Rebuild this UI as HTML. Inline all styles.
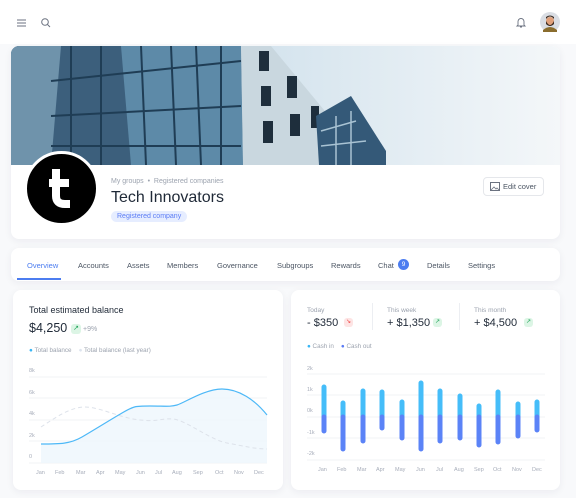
<!DOCTYPE html><html><head><style>
*{margin:0;padding:0;box-sizing:border-box}
body{width:576px;height:498px;background:#f8f9fb;font-family:"Liberation Sans",sans-serif;position:relative;overflow:hidden;color:#1f2937}
.a{position:absolute}
.card{position:absolute;background:#fff;border-radius:8px;box-shadow:0 2px 8px rgba(30,40,70,.06)}
.tab{position:absolute;top:261px;font-size:7.5px;color:#4b5563}
.s{font-size:6px;color:#9ca3af}
</style></head><body>
<div class="a" style="left:0;top:0;width:576px;height:44px;background:#fff"></div>
<svg class="a" style="left:16px;top:17px" width="12" height="12" viewBox="0 0 12 12"><path d="M1 3h9M1 6h9M1 9h9" stroke="#6b7280" stroke-width="1.1"/></svg>
<svg class="a" style="left:40px;top:17px" width="12" height="12" viewBox="0 0 12 12"><circle cx="5" cy="5" r="3.3" fill="none" stroke="#6b7280" stroke-width="1"/><path d="M7.5 7.5L10 10" stroke="#6b7280" stroke-width="1"/></svg>
<svg class="a" style="left:515px;top:16px" width="12" height="13" viewBox="0 0 12 13"><path d="M3 9V5.5a3 3 0 016 0V9l1 1H2z M5 11h2" fill="none" stroke="#6b7280" stroke-width=".9"/></svg>
<svg class="a" style="left:540px;top:12px" width="20" height="20" viewBox="0 0 20 20"><circle cx="10" cy="10" r="10" fill="#d9dde3"/><path d="M3 18q7-6 14 0v2H3z" fill="#8a6d2e"/><circle cx="10" cy="9" r="4" fill="#e0a07a"/><path d="M6 9q4 8 8 0v3q-4 4-8 0z" fill="#3a2a20"/><path d="M6 7q4-5 8 0v-2q-4-3-8 0z" fill="#3a2a20"/></svg>

<div class="card" style="left:11px;top:46px;width:549px;height:193px;overflow:hidden">
<svg class="a" style="left:0;top:0" width="549" height="119" viewBox="0 0 549 119">
<defs><linearGradient id="sky" x1="0" x2="1"><stop offset="0" stop-color="#b9d3e4"/><stop offset="1" stop-color="#f4f7f9"/></linearGradient></defs>
<rect width="549" height="119" fill="url(#sky)"/>
<polygon points="0,0 230,0 232,119 0,119" fill="#3c5f7c"/>
<polygon points="0,0 50,0 40,119 0,119" fill="#6f93ab"/>
<polygon points="110,0 230,0 232,119 120,119" fill="#5d8aa8"/>
<g stroke="#1f3d55" stroke-width="2" fill="none"><path d="M60 0V119M90 0V119M130 0L135 119M160 0L165 119M185 0L190 119M210 0V119"/><path d="M40 35L230 15M40 70L230 60M40 100L230 100"/></g>
<polygon points="230,0 260,0 318,70 318,119 232,119" fill="#c9d7df"/>
<g fill="#1e2e3c"><rect x="248" y="5" width="10" height="20"/><rect x="250" y="40" width="10" height="20"/><rect x="252" y="75" width="10" height="22"/><rect x="276" y="30" width="10" height="22"/><rect x="279" y="68" width="10" height="22"/><rect x="300" y="60" width="8" height="22"/></g>
<polygon points="305,70 340,50 375,105 375,119 308,119" fill="#345978"/>
<g stroke="#a9c3d3" stroke-width="1.5"><path d="M310 85L345 75M310 100L355 95M325 70V119M340 65V119"/></g>
</svg>
<svg class="a" style="left:13px;top:105px" width="75" height="75" viewBox="0 0 75 75"><circle cx="37.5" cy="37.5" r="36" fill="#000" stroke="#fff" stroke-width="3"/><path d="M32 18V45q0 8 9 8h5M25 32h20" fill="none" stroke="#fff" stroke-width="8"/></svg>
<div class="a s" style="left:100px;top:132px;font-size:7px">My groups &nbsp;•&nbsp; Registered companies</div>
<div class="a" style="left:100px;top:143px;font-size:16px;color:#1f2937">Tech Innovators</div>
<div class="a" style="left:100px;top:165px;font-size:7px;color:#5b7cf5;background:#e6edff;border-radius:8px;padding:2px 6px">Registered company</div>
<div class="a" style="left:472px;top:131px;width:61px;height:19px;border:1px solid #e5e7eb;border-radius:4px;font-size:7.5px;color:#4b5563;line-height:17px;padding-left:19px">Edit cover</div>
<svg class="a" style="left:479px;top:136px" width="10" height="9"><rect x=".5" y=".5" width="9" height="8" fill="none" stroke="#6b7280"/><path d="M1 8l3-3 2 2 1-1 2 2" fill="none" stroke="#6b7280" stroke-width=".8"/></svg>
</div>

<div class="card" style="left:11px;top:248px;width:549px;height:33px"></div>
<div class="a" style="left:17px;top:278px;width:44px;height:2px;background:#4c7df0"></div>
<div class="tab" style="left:27px;color:#4c7df0">Overview</div>
<div class="tab" style="left:78px">Accounts</div>
<div class="tab" style="left:127px">Assets</div>
<div class="tab" style="left:167px">Members</div>
<div class="tab" style="left:217px">Governance</div>
<div class="tab" style="left:277px">Subgroups</div>
<div class="tab" style="left:331px">Rewards</div>
<div class="tab" style="left:378px">Chat</div>
<div class="a" style="left:398px;top:259px;width:11px;height:11px;border-radius:50%;background:#4c7df0;color:#fff;font-size:6.5px;text-align:center;line-height:11px">9</div>
<div class="tab" style="left:427px">Details</div>
<div class="tab" style="left:468px">Settings</div>

<div class="card" style="left:13px;top:290px;width:270px;height:200px"></div>
<div class="a" style="left:29px;top:305px;font-size:9px">Total estimated balance</div>
<div class="a" style="left:29px;top:321px;font-size:12.5px">$4,250</div>
<div class="a" style="left:71px;top:324px;width:10px;height:10px;border-radius:3px;background:#dcf5e5;color:#22a55a;font-size:7px;text-align:center;line-height:10px">↗</div>
<div class="a s" style="left:83px;top:326px;font-size:7px">+9%</div>
<div class="a s" style="left:29px;top:347px;font-size:6.3px"><span style="color:#38b6f5">●</span> Total balance &nbsp;&nbsp;&nbsp;<span style="color:#dde4ee">●</span> Total balance (last year)</div>
<svg class="a" style="left:0;top:360px" width="290" height="120" viewBox="0 360 290 120">
<g stroke="#eef0f4" stroke-width=".7"><path d="M29 377H267M29 398H267M29 420H267M29 441H267M29 463H267"/></g>
<g font-size="5.5" fill="#a7adba" font-family="Liberation Sans"><text x="29" y="372">8k</text><text x="29" y="394">6k</text><text x="29" y="415">4k</text><text x="29" y="437">2k</text><text x="29" y="458">0</text>
<text x="36" y="474">Jan</text><text x="55" y="474">Feb</text><text x="76" y="474">Mar</text><text x="96" y="474">Apr</text><text x="115" y="474">May</text><text x="136" y="474">Jun</text><text x="155" y="474">Jul</text><text x="172" y="474">Aug</text><text x="193" y="474">Sep</text><text x="215" y="474">Oct</text><text x="234" y="474">Nov</text><text x="254" y="474">Dec</text></g>
<path d="M41 444C60 444 70 444 82 437S110 420 122 413 135 406 150 406 170 407 177 405 205 389 222 389 255 400 267 415V463H41Z" fill="#eef6fd" opacity=".8"/>
<path d="M41 427C55 418 70 407 85 407S120 418 140 420 160 418 173 419 210 440 227 443 255 449 267 449" fill="none" stroke="#dde2ea" stroke-width="1" stroke-dasharray="4 3"/>
<path d="M41 444C60 444 70 444 82 437S110 420 122 413 135 406 150 406 170 407 177 405 205 389 222 389 255 400 267 415" fill="none" stroke="#4db8f7" stroke-width="1.2"/>
</svg>

<div class="card" style="left:291px;top:290px;width:269px;height:200px"></div>
<div class="a s" style="left:307px;top:307px;font-size:6.5px">Today</div>
<div class="a" style="left:307px;top:317px;font-size:11px">- $350</div>
<div class="a" style="left:344px;top:318px;width:9px;height:9px;border-radius:3px;background:#fde4e4;color:#ef4444;font-size:6px;text-align:center;line-height:9px">↘</div>
<div class="a" style="left:372px;top:303px;width:1px;height:27px;background:#eceef2"></div>
<div class="a s" style="left:387px;top:307px;font-size:6.5px">This week</div>
<div class="a" style="left:387px;top:317px;font-size:11px">+ $1,350</div>
<div class="a" style="left:433px;top:318px;width:9px;height:9px;border-radius:3px;background:#dcf5e5;color:#22a55a;font-size:6px;text-align:center;line-height:9px">↗</div>
<div class="a" style="left:459px;top:303px;width:1px;height:27px;background:#eceef2"></div>
<div class="a s" style="left:474px;top:307px;font-size:6.5px">This month</div>
<div class="a" style="left:474px;top:317px;font-size:11px">+ $4,500</div>
<div class="a" style="left:524px;top:318px;width:9px;height:9px;border-radius:3px;background:#dcf5e5;color:#22a55a;font-size:6px;text-align:center;line-height:9px">↗</div>
<div class="a s" style="left:307px;top:343px;font-size:6.3px"><span style="color:#38b6f5">●</span> Cash in &nbsp;&nbsp;&nbsp;<span style="color:#5b7cf5">●</span> Cash out</div>
<svg class="a" style="left:288px;top:360px" width="288" height="120" viewBox="288 360 288 120">
<g stroke="#eef0f4" stroke-width=".7"><path d="M307 374H545M307 395H545M307 417H545M307 438H545M307 460H545"/></g>
<g font-size="5.5" fill="#a7adba" font-family="Liberation Sans"><text x="307" y="370">2k</text><text x="307" y="391">1k</text><text x="307" y="412">0k</text><text x="307" y="434">-1k</text><text x="307" y="455">-2k</text>
<text x="318" y="471">Jan</text><text x="337" y="471">Feb</text><text x="357" y="471">Mar</text><text x="376" y="471">Apr</text><text x="395" y="471">May</text><text x="416" y="471">Jun</text><text x="436" y="471">Jul</text><text x="454" y="471">Aug</text><text x="474" y="471">Sep</text><text x="493" y="471">Oct</text><text x="512" y="471">Nov</text><text x="532" y="471">Dec</text></g>
<g stroke-width="5" stroke-linecap="round">
<path stroke="#45bdf9" d="M324 387V417M343 403V417M363 391V417M382 392V417M402 402V417M421 383V417M440 391V417M460 396V417M479 406V417M498 392V417M518 404V417M537 402V417"/>
<path stroke="#5b83f7" d="M324 417V431M343 417V449M363 417V441M382 417V428M402 417V438M421 417V449M440 417V441M460 417V438M479 417V445M498 417V442M518 417V436M537 417V430"/>
</g></svg>
</body></html>
